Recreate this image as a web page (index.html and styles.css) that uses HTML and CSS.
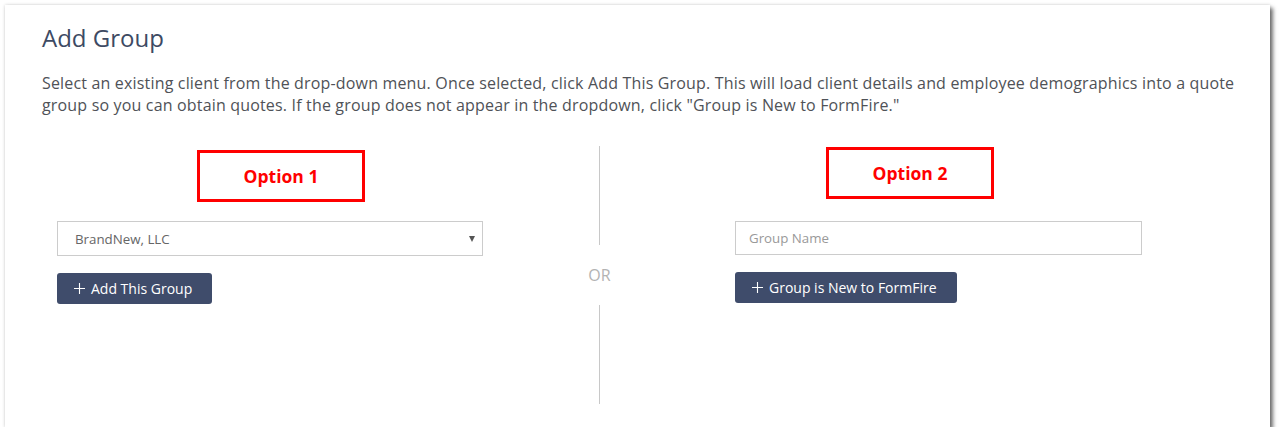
FILE: index.html
```html
<!DOCTYPE html>
<html>
<head>
<meta charset="utf-8">
<link rel="stylesheet" href="styles.css">
</head>
<body>
<div class="card">
  <h1 class="title">Add Group</h1>
  <p class="intro">Select an existing client from the drop-down menu. Once selected, click Add This Group. This will load client details and employee demographics into a quote group so you can obtain quotes. If the group does not appear in the dropdown, click "Group is New to FormFire."</p>
  <div class="options">
    <div class="col col-left">
      <div class="option-label">Option 1</div>
      <div class="select"><span class="select-value">BrandNew, LLC</span><span class="caret"></span></div>
      <button class="btn btn-add"><svg class="plus" width="11" height="11" viewBox="0 0 11 11"><path d="M5.5 0V11M0 5.5H11" stroke="#ffffff" stroke-width="1.1" fill="none"/></svg>Add This Group</button>
    </div>
    <div class="divider">
      <span class="line"></span>
      <span class="or">OR</span>
      <span class="line"></span>
    </div>
    <div class="col col-right">
      <div class="option-label">Option 2</div>
      <div class="input"><span class="placeholder">Group Name</span></div>
      <button class="btn btn-new"><svg class="plus" width="11" height="11" viewBox="0 0 11 11"><path d="M5.5 0V11M0 5.5H11" stroke="#ffffff" stroke-width="1.1" fill="none"/></svg>Group is New to FormFire</button>
    </div>
  </div>
</div>
</body>
</html>
```
FILE: styles.css
```css
html, body {
  margin: 0;
  padding: 0;
  background: #ffffff;
}

body {
  font-family: "Open Sans", "Liberation Sans", sans-serif;
}

.card {
  margin: 5px 0 0 5px;
  width: 1265px;
  height: 422px;
  box-sizing: border-box;
  padding: 18px 0 0 37px;
  background: #ffffff;
  box-shadow: 0 0 3px rgba(0, 0, 0, 0.18), 3px 3px 4px rgba(0, 0, 0, 0.55);
}

.title {
  margin: 0;
  font-size: 24px;
  line-height: 29px;
  font-weight: 400;
  color: #3d4a63;
}

.intro {
  margin: 20px 0 0 0;
  width: 1215px;
  font-size: 16px;
  letter-spacing: 0.17px;
  line-height: 22px;
  color: #4f5257;
}

.options {
  margin-top: 30px;
  display: flex;
}

.col-left {
  width: 557px;
  padding: 4px 0 0 15px;
  box-sizing: border-box;
}

.col-right {
  padding: 1px 0 0 0;
  width: 600px;
}

.option-label {
  width: 168px;
  height: 52px;
  box-sizing: border-box;
  border: 3px solid #ff0000;
  color: #ff0000;
  font-weight: 700;
  font-size: 17.5px;
  display: flex;
  align-items: center;
  justify-content: center;
  padding-bottom: 1px;
}

.col-left .option-label {
  margin-left: 140px;
}

.col-right .option-label {
  margin-left: 226px;
}

.select {
  margin-top: 19px;
  width: 426px;
  height: 35px;
  box-sizing: border-box;
  border: 1px solid #cccccc;
  display: flex;
  align-items: center;
  justify-content: space-between;
  padding: 0 7px 0 17px;
  font-size: 13.3px;
  color: #666666;
}

.caret {
  width: 0;
  height: 0;
  border-left: 3.5px solid transparent;
  border-right: 3.5px solid transparent;
  border-top: 6px solid #555555;
  margin-top: 1px;
}

.input {
  margin: 22px 0 0 135px;
  width: 407px;
  height: 34px;
  box-sizing: border-box;
  border: 1px solid #cccccc;
  display: flex;
  align-items: center;
  padding-left: 13px;
  font-size: 13.3px;
  color: #999999;
}

.btn {
  display: flex;
  align-items: center;
  margin-top: 17px;
  height: 31px;
  border: 0;
  border-radius: 3px;
  background: #3f4c6b;
  color: #ffffff;
  font-family: "Open Sans", "Liberation Sans", sans-serif;
  font-size: 14px;
  padding: 0 0 0 17px;
}

.btn-add {
  width: 155px;
}

.btn-new {
  margin-left: 135px;
  width: 222px;
}

.plus {
  flex: none;
  margin-right: 6px;
  margin-top: -1px;
}

.divider {
  width: 1px;
  display: flex;
  flex-direction: column;
  align-items: center;
}

.line {
  width: 1px;
  height: 99px;
  background: #c8c8c8;
}

.or {
  height: 60px;
  line-height: 60px;
  font-size: 16px;
  font-weight: 400;
  color: #b3b3b3;
}
```
